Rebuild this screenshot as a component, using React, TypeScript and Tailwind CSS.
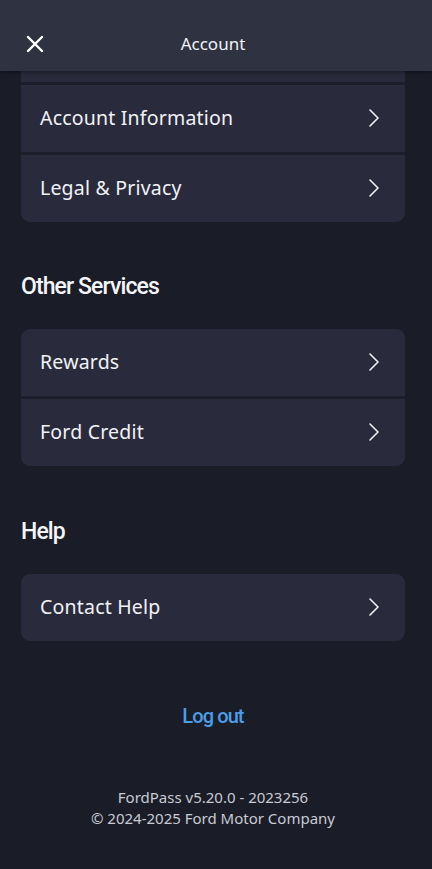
const font = "font-['Noto_Sans',sans-serif]"
const cond = "font-['Roboto',sans-serif]"

function Chevron() {
  return (
    <svg width="14" height="20" viewBox="0 0 14 20" fill="none" className="shrink-0">
      <path d="M3 2l8 8-8 8" stroke="#f2f2f5" strokeWidth="1.6" strokeLinecap="round" strokeLinejoin="round" />
    </svg>
  )
}

function Row({ label }: { label: string }) {
  return (
    <div className="flex h-[67px] items-center justify-between bg-[#292b3d] pb-[1px] pl-[19px] pr-[24px]">
      <span className={`${font} text-[19.5px] tracking-[0.2px] text-[#f2f2f5]`}>{label}</span>
      <Chevron />
    </div>
  )
}

function Card({ items }: { items: string[] }) {
  return (
    <div className="flex flex-col gap-[3px] overflow-hidden rounded-[9px] bg-[#1c1e2c]">
      {items.map(i => (
        <Row key={i} label={i} />
      ))}
    </div>
  )
}

function Heading({ children }: { children: string }) {
  return (
    <h2 className={`${cond} text-[23px] leading-[30px] font-medium tracking-[-0.9px] text-[#f5f5f7]`}>
      {children}
    </h2>
  )
}

export default function App() {
  return (
    <div className="flex h-[869px] w-[432px] flex-col overflow-hidden bg-[#1a1c28]">
      <header className="relative z-10 flex h-[71px] shrink-0 items-center bg-[#2f3241] pl-[25px] pt-[16px] shadow-[0_2px_4px_rgba(0,0,0,0.35)]">
        <svg width="20" height="20" viewBox="0 0 20 20" fill="none">
          <path d="M3 3l14 14M17 3L3 17" stroke="#fff" strokeWidth="2.4" strokeLinecap="round" />
        </svg>
        <span className={`${font} absolute left-0 right-[6px] top-[31px] text-center text-[17px] text-[#f2f2f5]`}>Account</span>
      </header>

      <div className="flex flex-col pl-[21px] pr-[27px]">
        <div className="flex flex-col gap-[3px] overflow-hidden rounded-b-[9px] bg-[#1c1e2c]">
          <div className="h-[11px] bg-[#292b3d]" />
          <Row label="Account Information" />
          <Row label="Legal & Privacy" />
        </div>

        <div className="mt-[50px]">
          <Heading>Other Services</Heading>
        </div>
        <div className="mt-[27px]">
          <Card items={['Rewards', 'Ford Credit']} />
        </div>

        <div className="mt-[51px]">
          <Heading>Help</Heading>
        </div>
        <div className="mt-[27px]">
          <Card items={['Contact Help']} />
        </div>

        <div className="mt-[60px] text-center">
          <span className={`${cond} text-[20px] font-medium tracking-[-0.9px] text-[#4b9ee6]`}>Log out</span>
        </div>

        <div className={`${font} mt-[56px] text-center text-[15px] leading-[21px] text-[#c9cad2]`}>
          <div>FordPass v5.20.0 - 2023256</div>
          <div>© 2024-2025 Ford Motor Company</div>
        </div>
      </div>
    </div>
  )
}
